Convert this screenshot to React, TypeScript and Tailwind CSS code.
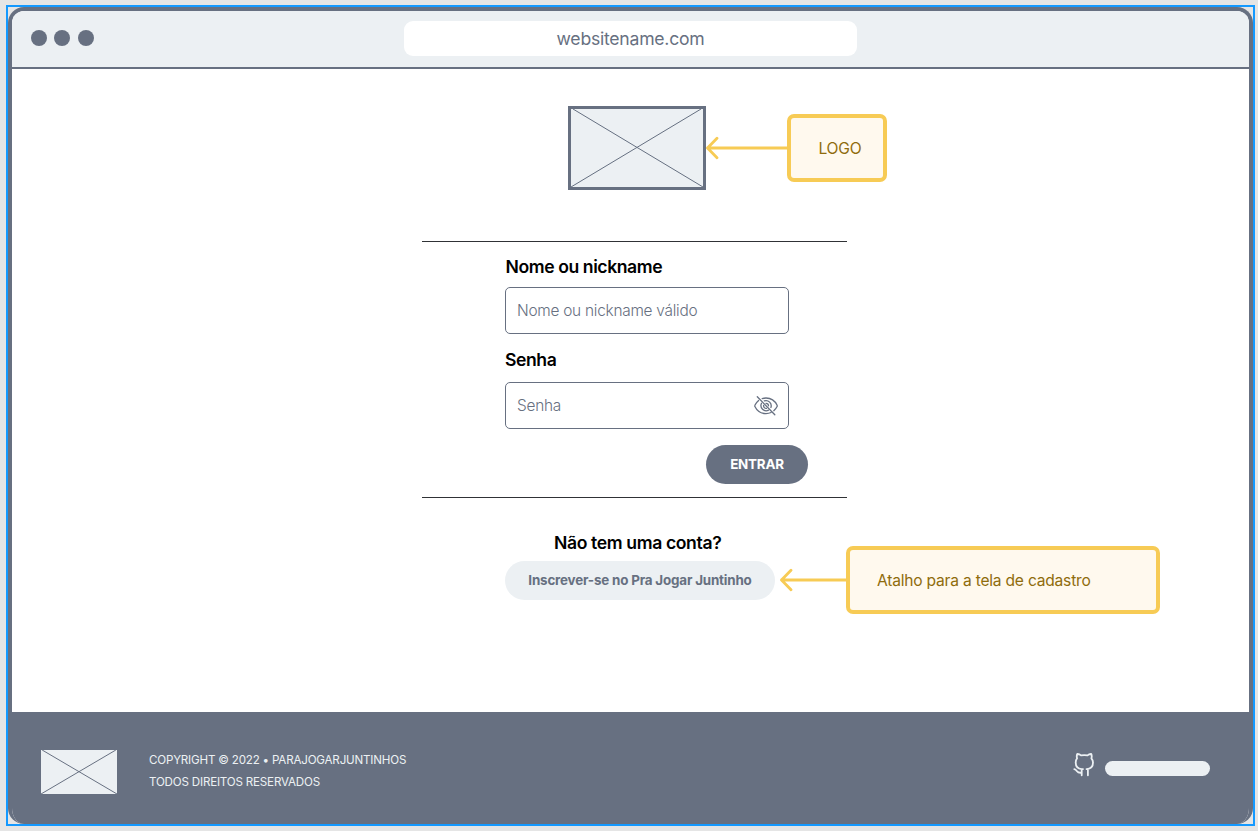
import React from "react";

function ImagePlaceholder({ className }: { className: string }) {
  return (
    <div className={className}>
      <svg className="block h-full w-full" viewBox="0 0 132 78" preserveAspectRatio="none" fill="none" stroke="#677081">
        <path d="M2 0L132 78M130 0L0 78" vectorEffect="non-scaling-stroke" />
      </svg>
    </div>
  );
}

function Arrow({ width }: { width: number }) {
  return (
    <svg width={width} height="24" viewBox={`0 0 ${width} 24`} fill="none" stroke="#f7cb55" strokeWidth="2.8" className="block shrink-0">
      <path d={`M1.500 12H${width}M11 2.200L1.500 12L11 21.800`} strokeLinecap="round" strokeLinejoin="round" />
    </svg>
  );
}

function Note({ className, children }: { className: string; children: React.ReactNode }) {
  return (
    <div className={`flex h-[68px] shrink-0 items-center rounded-[7px] border-4 border-[#f7cb55] bg-[#fff9ee] pt-[2px] pl-[27px] text-[15.600px] tracking-[-0.22px] text-[#8f6c0c] ${className}`}>
      {children}
    </div>
  );
}

function EyeOff() {
  return (
    <svg width="24" height="20" viewBox="0 0 24 20" fill="none" stroke="#677081" strokeWidth="1.3" strokeLinecap="round" className="block">
      <path d="M4.600 4.500C2.900 5.900 1.700 7.600.9 9.300c-.2.4-.2.8 0 1.200C3 14.800 7.100 17.600 12 17.600c1.900 0 3.600-.4 5.100-1.100M8.200 2.600C9.400 2.200 10.700 2 12 2c4.900 0 9 2.900 11.100 7.300.2.400.2.800 0 1.200-.8 1.600-1.900 3-3.300 4.200" />
      <path d="M7.500 7.300a5.200 5.200 0 0 0 7 6.900M10.300 4.900a5.200 5.200 0 0 1 6.600 6.600" />
      <path d="M9.600 9.500a2.600 2.600 0 0 0 2.800 2.900M12 7.300a2.600 2.600 0 0 1 2.500 2.500M3.300.8l17.500 18" />
    </svg>
  );
}

function Octocat() {
  return (
    <svg width="22" height="24" viewBox="0 0 22 24" fill="none" stroke="#ecf0f3" strokeWidth="1.8" strokeLinecap="round" strokeLinejoin="round" className="block">
      <path d="M8.700 22.300v-6.200C5 15.800 2.700 13.500 2.700 9.500c0-1.800.5-3.100 1.400-4.200-.5-1.400-.4-3 .2-4.300 1.400-.1 2.600.4 3.700 1.400 2.100-.4 4.400-.4 6.500 0 1.100-1 2.300-1.500 3.700-1.400.6 1.300.7 2.900.2 4.300 1 1.100 1.600 2.400 1.600 4.200 0 4-2.600 6.300-6.300 6.600M14.900 22.300v-6.200h-1.400M8.700 19.600c-2.200.4-3.700 0-4.700-1.400-.8-1-1.500-1.800-2.700-2M8.700 16.100H10" />
    </svg>
  );
}

export default function App() {
  return (
    <div className="h-[831px] w-[1258px] overflow-hidden bg-[#e5e5e5] pt-[5px] pl-[6px] font-['Inter',sans-serif]">
      <div className="h-[821px] w-[1249px] border-2 border-[#1499ff]">
        <div className="flex h-[817px] flex-col overflow-hidden rounded-[16px] border-4 border-b-0 border-[#677081] bg-white">
          <header className="flex h-[58px] shrink-0 items-center border-b-2 border-[#677081] bg-[#ecf0f3] pb-[2px]">
            <div className="ml-[19px] flex w-[373px] gap-[7.400px]">
              <span className="size-4 rounded-full bg-[#677081]" />
              <span className="size-4 rounded-full bg-[#677081]" />
              <span className="size-4 rounded-full bg-[#677081]" />
            </div>
            <div className="flex h-[35px] w-[453px] items-center justify-center rounded-[9px] bg-white pt-[2px] text-[17.600px] tracking-[-0.24px] text-[#677081]">
              <span>websitename.com</span>
            </div>
          </header>

          <main className="flex grow flex-col">
            <div className="mt-[37px] ml-[556px] flex h-[84px] items-center">
              <ImagePlaceholder className="h-[84px] w-[138px] shrink-0 border-3 border-[#677081] bg-[#ecf0f3]" />
              <Arrow width={81.4} />
              <Note className="w-[100px]">LOGO</Note>
            </div>

            <form className="mt-[51px] ml-[410px] flex h-[257px] w-[425px] flex-col border-y border-[#303236] pl-[83px]">
              <label className="mt-[12px] pl-[0.500px] text-[17.600px] leading-[26px] font-semibold tracking-[-0.42px] text-black">Nome ou nickname</label>
              <div className="mt-[7px] flex h-[47px] w-[284px] items-center rounded-[5px] border border-[#677081] pt-px pl-[11px] text-[15.400px] font-[350] tracking-[-0.25px] text-[#677081]">
                Nome ou nickname válido
              </div>
              <label className="mt-[13px] text-[17.600px] leading-[26px] font-semibold tracking-[-0.42px] text-black">Senha</label>
              <div className="mt-[9px] flex h-[47px] w-[284px] items-center justify-between rounded-[5px] border border-[#677081] pr-[10px] pl-[11px] text-[15.400px] font-[350] tracking-[-0.25px] text-[#677081]">
                <span className="pt-px">Senha</span>
                <EyeOff />
              </div>
              <button type="button" className="mt-[16px] ml-[201px] h-[39px] w-[102px] rounded-full bg-[#677081] text-[13.400px] font-bold tracking-[-0.2px] text-white">
                ENTRAR
              </button>
            </form>

            <h2 className="mt-[32px] ml-[542px] text-[17.600px] leading-[26px] font-semibold tracking-[-0.38px] text-black">Não tem uma conta?</h2>
            <div className="-mt-[10px] ml-[493px] flex h-[68px] items-center">
              <button type="button" className="h-[39px] w-[270px] shrink-0 rounded-full bg-[#ecf0f3] text-[13.400px] font-bold tracking-[-0.18px] text-[#677081]">
                Inscrever-se no Pra Jogar Juntinho
              </button>
              <div className="ml-[5px]">
                <Arrow width={66} />
              </div>
              <Note className="w-[314px]">Atalho para a tela de cadastro</Note>
            </div>
          </main>

          <footer className="flex h-[112px] shrink-0 items-start bg-[#677081] text-[#ecf0f3]">
            <ImagePlaceholder className="mt-[38px] ml-[29px] h-[44px] w-[76px] shrink-0 bg-[#ecf0f3]" />
            <p className="mt-[38px] ml-8 w-[924px] text-[11.600px] leading-[21.500px] tracking-[-0.19px]">
              COPYRIGHT © 2022 • PARAJOGARJUNTINHOS
              <br />
              TODOS DIREITOS RESERVADOS
            </p>
            <div className="mt-[41px]">
              <Octocat />
            </div>
            <span className="mt-[49px] ml-[10px] h-[15px] w-[105px] shrink-0 rounded-full bg-[#ecf0f3]" />
          </footer>
        </div>
      </div>
    </div>
  );
}
